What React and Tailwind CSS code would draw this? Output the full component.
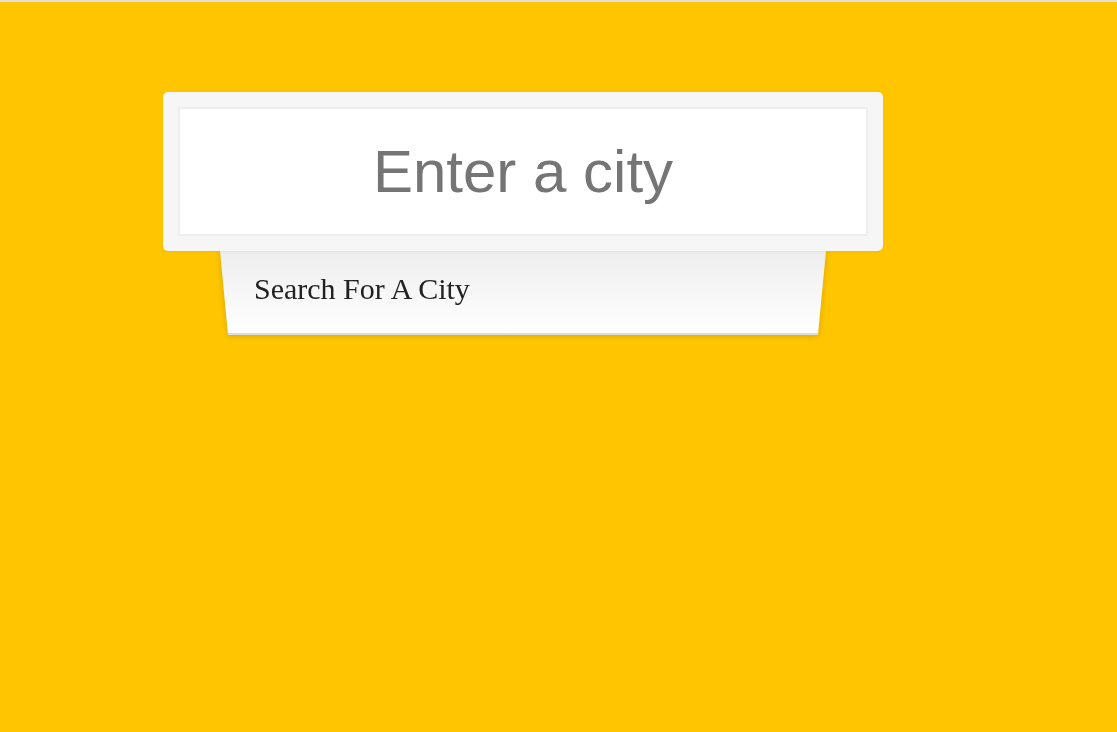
import React from 'react';

function App() {
  return (
    <div className="min-h-[732px] bg-[#ffc600] border-t-2 border-[#e0e0e0] pt-[90px] pl-[163px]">
      <div className="w-[720px] relative">
        {/* search card */}
        <div className="relative z-10 bg-[#f6f6f6] rounded-[5px] p-[15px] shadow-[0_1px_3px_rgba(0,0,0,0.06)]">
          <input
            type="text"
            placeholder="Enter a city"
            className="block w-full h-[129px] bg-white border-2 border-[#eeeeee] text-center text-[60px] text-[#757575] placeholder:text-[#757575] outline-none"
            style={{ fontFamily: '"Liberation Sans", Arial, sans-serif' }}
          />
        </div>
        {/* tab below */}
        <div className="ml-[57px] w-[606px] drop-shadow-[0_1px_3px_rgba(150,100,0,0.35)]">
          <div className="h-[84px] bg-gradient-to-b from-[#eeeeee] to-[#ffffff] [clip-path:polygon(0_0,100%_0,calc(100%-8px)_100%,8px_100%)] border-b-2 border-[#dddddd] pl-[34px] pt-[15px]">
            <span
              className="text-[30px] text-[#222222]"
              style={{ fontFamily: '"Liberation Serif", "Times New Roman", serif' }}
            >
              Search For A City
            </span>
          </div>
        </div>
      </div>
    </div>
  );
}

export default App;
